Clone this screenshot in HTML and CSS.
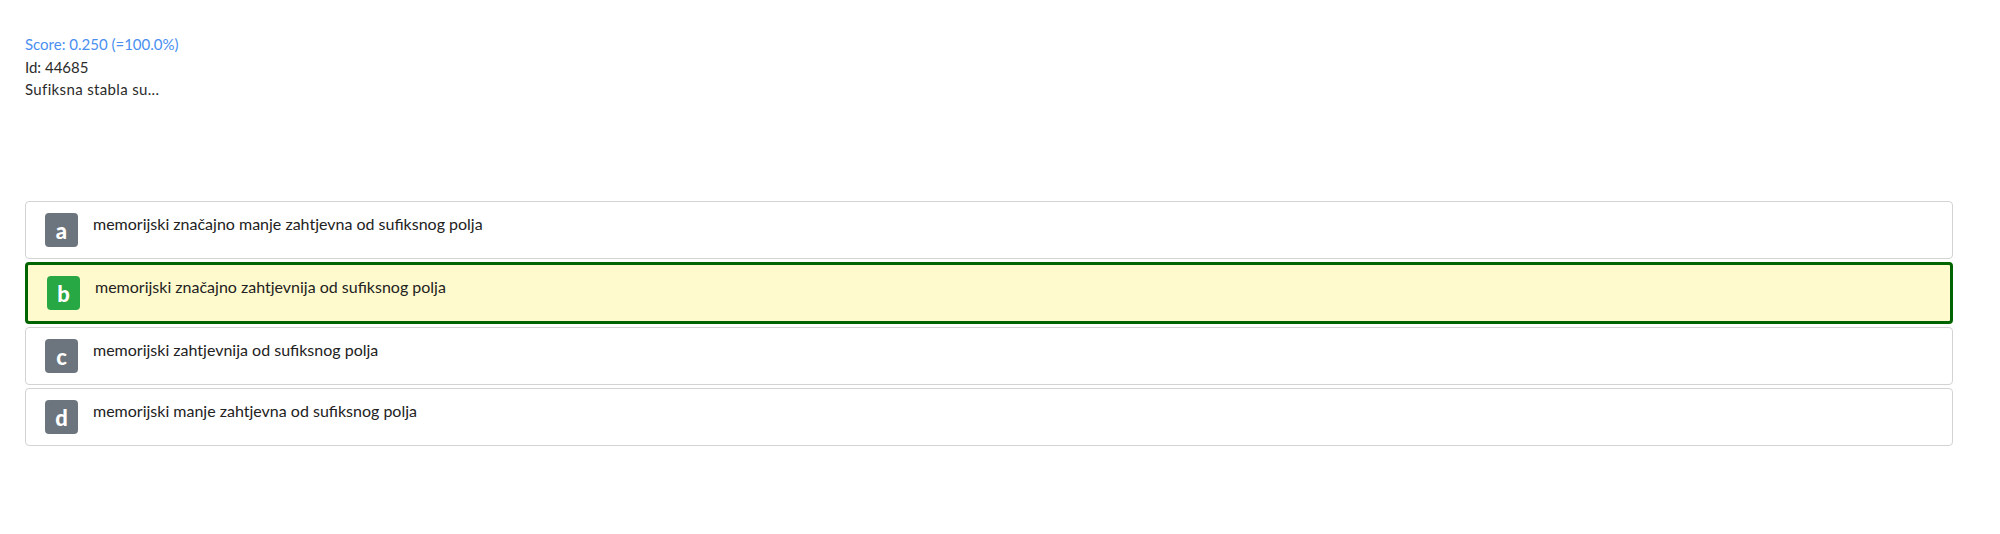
FILE: index.html
```html
<!DOCTYPE html>
<html lang="hr">
<head>
<meta charset="utf-8">
<title>Question 44685</title>
<link rel="stylesheet" href="styles.css">
</head>
<body>
<div class="page">
  <div class="meta">
    <div class="score">Score: 0.250 (=100.0%)</div>
    <div class="id">Id: 44685</div>
    <div class="question">Sufiksna stabla su...</div>
  </div>
  <div class="options">
    <div class="option">
      <span class="badge">a</span>
      <span class="label">memorijski značajno manje zahtjevna od sufiksnog polja</span>
    </div>
    <div class="option correct">
      <span class="badge badge-ok">b</span>
      <span class="label">memorijski značajno zahtjevnija od sufiksnog polja</span>
    </div>
    <div class="option">
      <span class="badge">c</span>
      <span class="label">memorijski zahtjevnija od sufiksnog polja</span>
    </div>
    <div class="option">
      <span class="badge">d</span>
      <span class="label">memorijski manje zahtjevna od sufiksnog polja</span>
    </div>
  </div>
</div>
</body>
</html>
```
FILE: styles.css
```css
html, body {
  margin: 0;
  padding: 0;
  background: #ffffff;
}
body {
  font-family: Lato, "Open Sans", "Noto Sans", sans-serif;
  color: #2b2b2b;
  font-size: 15px;
}
.page {
  padding: 33px 47px 0 25px;
}
.meta {
  line-height: 22.5px;
}
.score {
  color: #4a8ff0;
}
.question {
  letter-spacing: 0.35px;
}
.options {
  margin-top: 100px;
  display: flex;
  flex-direction: column;
  gap: 3px;
}
.option {
  display: flex;
  align-items: flex-start;
  gap: 15px;
  border: 1px solid #d3d3d3;
  border-radius: 4px;
  padding: 11px 19px;
  background: #ffffff;
}
.option.correct {
  border: 3px solid #006400;
  background: #fffacd;
}
.badge {
  flex: none;
  width: 33px;
  height: 34px;
  border-radius: 4px;
  background: #6c757d;
  color: #ffffff;
  font-weight: 900;
  font-size: 22px;
  line-height: 36px;
  text-align: center;
}
.badge-ok {
  background: #28a745;
}
.label {
  font-size: 16px;
  line-height: 22px;
  color: #222;
}
```
